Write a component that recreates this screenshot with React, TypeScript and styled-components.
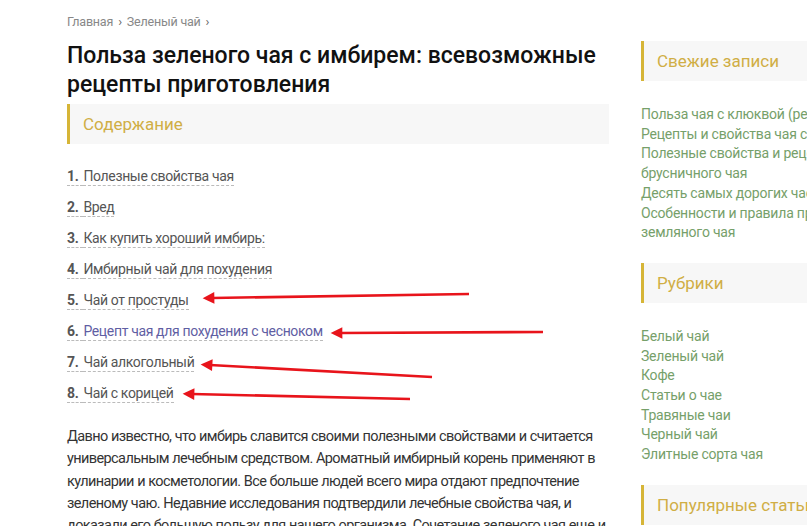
import React from "react";
import styled, { createGlobalStyle } from "styled-components";

// Données de la page
const contents = [
  "Полезные свойства чая",
  "Вред",
  "Как купить хороший имбирь:",
  "Имбирный чай для похудения",
  "Чай от простуды",
  "Рецепт чая для похудения с чесноком",
  "Чай алкогольный",
  "Чай с корицей",
];

const recent = [
  "Польза чая с клюквой (рецепты)",
  "Рецепты и свойства чая с облепихой",
  "Полезные свойства и рецепты брусничного чая",
  "Десять самых дорогих чаев мира",
  "Особенности и правила приготовления земляного чая",
];

const rubrics = [
  "Белый чай",
  "Зеленый чай",
  "Кофе",
  "Статьи о чае",
  "Травяные чаи",
  "Черный чай",
  "Элитные сорта чая",
];

// Flèches rouges dessinées par-dessus la liste (coordonnées relatives à l'article)
const arrows = [
  { x1: 402, y1: 294, x2: 145, y2: 298 },
  { x1: 476, y1: 332, x2: 273, y2: 333 },
  { x1: 365, y1: 377, x2: 143, y2: 365 },
  { x1: 343, y1: 399, x2: 125, y2: 394 },
];

const App: React.FC = () => {
  return (
    <>
      <GlobalStyle />
      <Page>
        <Article>
          <Breadcrumbs>
            <Crumb>Главная</Crumb>
            <Sep>›</Sep>
            <Crumb>Зеленый чай</Crumb>
            <Sep>›</Sep>
          </Breadcrumbs>
          <Title>Польза зеленого чая с имбирем: всевозможные рецепты приготовления</Title>
          <BoxTitle>Содержание</BoxTitle>
          <Toc>
            {contents.map((item, i) => (
              <TocItem key={item}>
                <TocNum>{i + 1}.</TocNum>
                <TocLink $visited={i === 5}>{item}</TocLink>
              </TocItem>
            ))}
          </Toc>
          <Paragraph>
            Давно известно, что имбирь славится своими полезными свойствами и считается
            универсальным лечебным средством. Ароматный имбирный корень применяют в
            кулинарии и косметологии. Все больше людей всего мира отдают предпочтение
            зеленому чаю. Недавние исследования подтвердили лечебные свойства чая, и
            доказали его большую пользу для нашего организма. Сочетание зеленого чая еще и с
            имбирем усиливает его действие.
          </Paragraph>
          <Arrows width="560" height="526" viewBox="0 0 560 526">
            <defs>
              <marker id="head" viewBox="0 0 10 10" refX="2" refY="5" markerWidth="6" markerHeight="4.5" orient="auto-start-reverse">
                <path d="M0 0 L10 5 L0 10 z" fill="#e8141b" />
              </marker>
            </defs>
            {arrows.map((a, i) => (
              <line
                key={i}
                x1={a.x1}
                y1={a.y1}
                x2={a.x2}
                y2={a.y2}
                stroke="#e8141b"
                strokeWidth="2.6"
                markerEnd="url(#head)"
              />
            ))}
          </Arrows>
        </Article>
        <Sidebar>
          <Widget>
            <BoxTitle>Свежие записи</BoxTitle>
            <LinkList>
              {recent.map((r) => (
                <SideLink key={r}>{r}</SideLink>
              ))}
            </LinkList>
          </Widget>
          <Widget>
            <BoxTitle>Рубрики</BoxTitle>
            <LinkList>
              {rubrics.map((r) => (
                <SideLink key={r}>{r}</SideLink>
              ))}
            </LinkList>
          </Widget>
          <Widget>
            <BoxTitle>Популярные статьи</BoxTitle>
          </Widget>
        </Sidebar>
      </Page>
    </>
  );
};

// Styles
const GlobalStyle = createGlobalStyle`
  html, body {
    margin: 0;
    padding: 0;
    background: #fff;
    overflow: hidden;
  }
  body {
    font-family: Roboto, "Noto Sans", Arial, sans-serif;
    color: #333;
  }
`;

const Page = styled.div`
  width: 807px;
  height: 526px;
  overflow: hidden;
  display: flex;
  gap: 32px;
  padding-left: 67px;
  box-sizing: border-box;
`;

const Article = styled.main`
  position: relative;
  width: 542px;
  flex-shrink: 0;
  padding-top: 13px;
`;

const Breadcrumbs = styled.div`
  display: flex;
  align-items: center;
  gap: 5px;
  font-size: 12.5px;
  line-height: 18px;
  color: #888;
  letter-spacing: -0.2px;
`;

const Crumb = styled.span``;

const Sep = styled.span`
  font-size: 13px;
  color: #666;
`;

const Title = styled.h1`
  margin: 10px 0 5px;
  font-size: 23px;
  font-weight: 500;
  line-height: 29px;
  color: #111;
`;

const BoxTitle = styled.div`
  height: 40px;
  display: flex;
  align-items: center;
  padding-left: 13px;
  background: #f7f7f7;
  border-left: 3px solid #d6b537;
  font-size: 17px;
  color: #d0ae45;
  white-space: nowrap;
`;

const Toc = styled.ol`
  list-style: none;
  margin: 17px 0 0;
  padding: 0;
`;

const TocItem = styled.li`
  height: 31px;
  display: flex;
  align-items: center;
  font-size: 14px;
  letter-spacing: -0.35px;
`;

const TocNum = styled.span`
  font-weight: 700;
  color: #555;
  border-bottom: 1px dashed #bbb;
  padding-right: 5px;
  padding-bottom: 1px;
`;

const TocLink = styled.a<{ $visited?: boolean }>`
  color: ${(p) => (p.$visited ? "#5f5ea3" : "#555")};
  border-bottom: 1px dashed #bbb;
  padding-bottom: 1px;
  text-decoration: none;
`;

const Paragraph = styled.p`
  margin: 17px 0 0;
  font-size: 14.5px;
  line-height: 22.3px;
  color: #333;
  letter-spacing: -0.6px;
  word-spacing: 0.3px;
`;

const Arrows = styled.svg`
  position: absolute;
  left: 0;
  top: 0;
  pointer-events: none;
`;

const Sidebar = styled.aside`
  width: 300px;
  flex-shrink: 0;
  padding-top: 41px;
  display: flex;
  flex-direction: column;
  gap: 20px;
`;

const Widget = styled.section`
  display: flex;
  flex-direction: column;
`;

const LinkList = styled.ul`
  list-style: none;
  margin: 24px 0 0;
  padding: 0;
  width: 264px;
`;

const SideLink = styled.li`
  font-size: 14px;
  line-height: 19.7px;
  color: #76a06a;
  letter-spacing: -0.2px;
`;

export default App;
